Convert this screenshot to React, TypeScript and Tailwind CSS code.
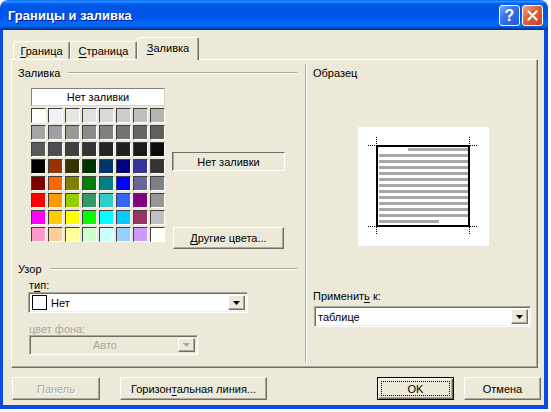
import React from 'react';

// Word "Borders and Shading" fill palette, 8 x 8
const PALETTE: string[][] = [
  ['#FFFFFF', '#F2F2F2', '#E6E6E6', '#E0E0E0', '#D9D9D9', '#CCCCCC', '#BFBFBF', '#B3B3B3'],
  ['#A6A6A6', '#A0A0A0', '#999999', '#8C8C8C', '#808080', '#737373', '#666666', '#606060'],
  ['#595959', '#4D4D4D', '#404040', '#333333', '#262626', '#202020', '#1A1A1A', '#0D0D0D'],
  ['#000000', '#993300', '#333300', '#003300', '#003366', '#000080', '#333399', '#333333'],
  ['#800000', '#FF6600', '#808000', '#008000', '#008080', '#0000FF', '#666699', '#808080'],
  ['#FF0000', '#FF9900', '#99CC00', '#339966', '#33CCCC', '#3366FF', '#800080', '#969696'],
  ['#FF00FF', '#FFCC00', '#FFFF00', '#00FF00', '#00FFFF', '#00CCFF', '#993366', '#C0C0C0'],
  ['#FF99CC', '#FFCC99', '#FFFF99', '#CCFFCC', '#CCFFFF', '#99CCFF', '#CC99FF', '#FFFFFF'],
];

const RAISED =
  'border border-t-white border-l-white border-r-[#716F64] border-b-[#716F64] shadow-[inset_-1px_-1px_0_#ACA899]';
const SUNKEN =
  'border border-t-[#ACA899] border-l-[#ACA899] border-r-white border-b-white shadow-[inset_1px_1px_0_#716F64,inset_-1px_-1px_0_#F1EFE2]';

const Mn = ({ children }: { children: React.ReactNode }) => (
  <span className="underline underline-offset-[2px]">{children}</span>
);

const DropButton = ({ disabled = false }: { disabled?: boolean }) => (
  <div className={`w-[17px] self-stretch shrink-0 flex items-center justify-center bg-[#ECE9D8] ${RAISED}`}>
    <svg width="7" height="4" viewBox="0 0 7 4">
      <path d="M0 0H7L3.5 4Z" fill={disabled ? '#ACA899' : '#000'} />
    </svg>
  </div>
);

const GroupHeader = ({ label }: { label: string }) => (
  <div className="flex h-[12px] pl-[6px]">
    <span>{label}</span>
    <div className="flex-1 ml-[8px] mr-[8px] mt-[5px] h-[2px] border-t border-t-[#ACA899] border-b border-b-white" />
  </div>
);

const Button = ({
  width,
  children,
  disabled = false,
  isDefault = false,
}: {
  width: string;
  children: React.ReactNode;
  disabled?: boolean;
  isDefault?: boolean;
}) => {
  if (isDefault) {
    return (
      <div
        className={`${width} h-[23px] flex p-[3px] bg-[#ECE9D8] border border-black shadow-[inset_1px_1px_0_#fff,inset_-1px_-1px_0_#716F64,inset_-2px_-2px_0_#ACA899]`}
      >
        <div className="flex-1 flex items-center justify-center border border-dotted border-black">{children}</div>
      </div>
    );
  }
  return (
    <div
      className={`${width} h-[23px] flex items-center justify-center bg-[#ECE9D8] ${RAISED} ${
        disabled ? 'text-[#ACA899] [text-shadow:1px_1px_0_#fff]' : ''
      }`}
    >
      {children}
    </div>
  );
};

const TitleBar = () => (
  <div className="h-[30px] shrink-0 flex items-center pl-[8px] pr-[5px] bg-[linear-gradient(to_bottom,#0058EE_0%,#3593FF_4%,#288EFF_6%,#127DFF_8%,#036FFC_10%,#0262EE_14%,#0057E5_20%,#0054E3_24%,#0055EB_56%,#005BF5_66%,#026AFE_76%,#0062EF_86%,#0052D6_92%,#0040AB_94%,#003092_100%)]">
    <span className="flex-1 pt-[1px] text-white font-bold text-[13px] leading-[16px] [text-shadow:1px_1px_0_#0A1883]">
      Границы и заливка
    </span>
    <div className="mt-[1px] w-[21px] h-[21px] rounded-[3px] border border-white flex items-center justify-center bg-[linear-gradient(135deg,#7AA8FB_0%,#3A72EA_40%,#1F55D6_100%)] text-white font-bold text-[16px] leading-none">
      ?
    </div>
    <div className="mt-[1px] ml-[2px] w-[21px] h-[21px] rounded-[3px] border border-white flex items-center justify-center bg-[linear-gradient(135deg,#F3A58A_0%,#E4643A_40%,#C8411B_100%)]">
      <svg width="11" height="11" viewBox="0 0 11 11">
        <path d="M1.5 1.5L9.5 9.5M9.5 1.5L1.5 9.5" stroke="#fff" strokeWidth="2" strokeLinecap="square" />
      </svg>
    </div>
  </div>
);

const TAB = 'flex items-center justify-center border-t border-l border-t-white border-l-white border-r border-r-[#716F64] shadow-[inset_-1px_0_0_#ACA899] rounded-t-[2px]';

const Tabs = () => (
  <div className="flex items-end h-[22px] pl-[2px]">
    <div className={`w-[57px] h-[18px] pt-[1px] ${TAB}`}>
      <span>
        <Mn>Г</Mn>раница
      </span>
    </div>
    <div className={`w-[67px] h-[18px] pt-[1px] ${TAB}`}>
      <span>
        <Mn>С</Mn>траница
      </span>
    </div>
    <div className={`relative z-10 w-[62px] h-[23px] -mb-[1px] pb-[2px] bg-[#ECE9D8] ${TAB}`}>
      <span>
        <Mn>З</Mn>аливка
      </span>
    </div>
  </div>
);

const Preview = () => {
  const lines = Array.from({ length: 13 }, (_, i) => i);
  return (
    <div className="ml-[51px] w-[131px] h-[119px] bg-white">
      <svg width="131" height="119" viewBox="0 0 131 119">
        {lines.map((i) => {
          const x1 = i === 0 ? 50 : 21;
          const x2 = i === 12 ? 81 : 110;
          return <rect key={i} x={x1} y={21 + i * 6} width={x2 - x1} height={3} fill="#A8A8A8" />;
        })}
        <rect x="19" y="19" width="92" height="80" fill="none" stroke="#000" strokeWidth="2" />
        <g stroke="#000" strokeWidth="1" strokeDasharray="1 1">
          <path d="M18.5 10V18M10 18.5H18" />
          <path d="M111.5 10V18M112 18.5H120" />
          <path d="M18.5 100V108M10 99.5H18" />
          <path d="M111.5 100V108M112 99.5H120" />
        </g>
      </svg>
    </div>
  );
};

const Panel = () => (
  <div className="w-[527px] h-[309px] flex border border-t-white border-l-white border-r-[#716F64] border-b-[#716F64] shadow-[inset_-1px_-1px_0_#ACA899]">
    {/* left column */}
    <div className="w-[293px] flex flex-col">
      <div className="mt-[7px]">
        <GroupHeader label="Заливка" />
      </div>
      <div className="flex mt-[9px] ml-[19px]">
        <div className="flex flex-col w-[134px]">
          <div className="h-[18px] flex items-center justify-center bg-white border border-t-[#808080] border-l-[#808080] border-r-[#D8D5C8] border-b-[#D8D5C8]">
            Нет заливки
          </div>
          <div className="mt-[2px] grid grid-cols-8 gap-[2px]">
            {PALETTE.flat().map((c, i) => (
              <div
                key={i}
                className="w-[15px] h-[15px] border border-t-[#404040] border-l-[#404040] border-r-white border-b-white"
                style={{ backgroundColor: c }}
              />
            ))}
          </div>
        </div>
        <div className="flex flex-col ml-[7px]">
          <div className="mt-[64px] w-[113px] h-[19px] flex items-center justify-center border border-t-[#716F64] border-l-[#716F64] border-r-white border-b-white shadow-[inset_1px_0_0_#ACA899]">
            Нет заливки
          </div>
          <div className={`mt-[56px] ml-[1px] w-[111px] h-[22px] flex items-center justify-center ${RAISED}`}>
            <span>
              <Mn>Д</Mn>ругие цвета...
            </span>
          </div>
        </div>
      </div>

      <div className="mt-[14px]">
        <GroupHeader label="Узор" />
      </div>
      <div className="mt-[4px] pl-[17px] h-[11px]">
        <span>
          т<Mn>и</Mn>п:
        </span>
      </div>
      <div className={`mt-[2px] ml-[16px] w-[220px] h-[21px] flex p-[2px] bg-white ${SUNKEN}`}>
        <div className="ml-[1px] w-[15px] self-stretch border border-black bg-white" />
        <div className="flex-1 flex items-center pl-[4px]">Нет</div>
        <DropButton />
      </div>
      <div className="mt-[10px] pl-[17px] h-[11px] text-[#ACA899]">цвет фона:</div>
      <div className={`mt-[1px] ml-[17px] w-[169px] h-[20px] flex p-[2px] bg-[#ECE9D8] ${SUNKEN}`}>
        <div className="flex-1 flex items-center justify-center text-[#ACA899]">Авто</div>
        <DropButton disabled />
      </div>
    </div>

    {/* divider */}
    <div className="w-[2px] mt-[4px] mb-[5px] border-l border-l-[#ACA899] border-r border-r-white" />

    {/* right column */}
    <div className="flex-1 flex flex-col">
      <div className="mt-[7px] pl-[6px] h-[12px]">Образец</div>
      <div className="mt-[48px]">
        <Preview />
      </div>
      <div className="mt-[44px] pl-[6px] h-[12px]">
        <span>
          Применит<Mn>ь</Mn> к:
        </span>
      </div>
      <div className={`mt-[4px] ml-[7px] w-[217px] h-[21px] flex p-[2px] bg-white ${SUNKEN}`}>
        <div className="flex-1 flex items-center pl-[1px]">таблице</div>
        <DropButton />
      </div>
    </div>
  </div>
);

const Footer = () => (
  <div className="flex mt-[9px] pl-[1px] pr-[3px]">
    <Button width="w-[88px]" disabled>
      Панель
    </Button>
    <div className="ml-[20px]">
      <Button width="w-[147px]">
        <span>
          Горизон<Mn>т</Mn>альная линия...
        </span>
      </Button>
    </div>
    <div className="flex-1" />
    <Button width="w-[77px]" isDefault>
      OK
    </Button>
    <div className="ml-[10px]">
      <Button width="w-[77px]">Отмена</Button>
    </div>
  </div>
);

export default function App() {
  return (
    <div className="w-[551px] h-[412px] bg-white font-['Liberation_Sans',Arial,sans-serif] text-[11px] leading-[12px] text-black">
      <div className="w-[548px] h-[409px] flex flex-col rounded-t-[8px] overflow-hidden">
        <TitleBar />
        <div className="flex-1 flex flex-col bg-[#ECE9D8] border-l-[3px] border-r-[4px] border-b-[4px] border-[#0B4BDF] pl-[8px] pt-[7px]">
          <Tabs />
          <Panel />
          <Footer />
        </div>
      </div>
    </div>
  );
}
